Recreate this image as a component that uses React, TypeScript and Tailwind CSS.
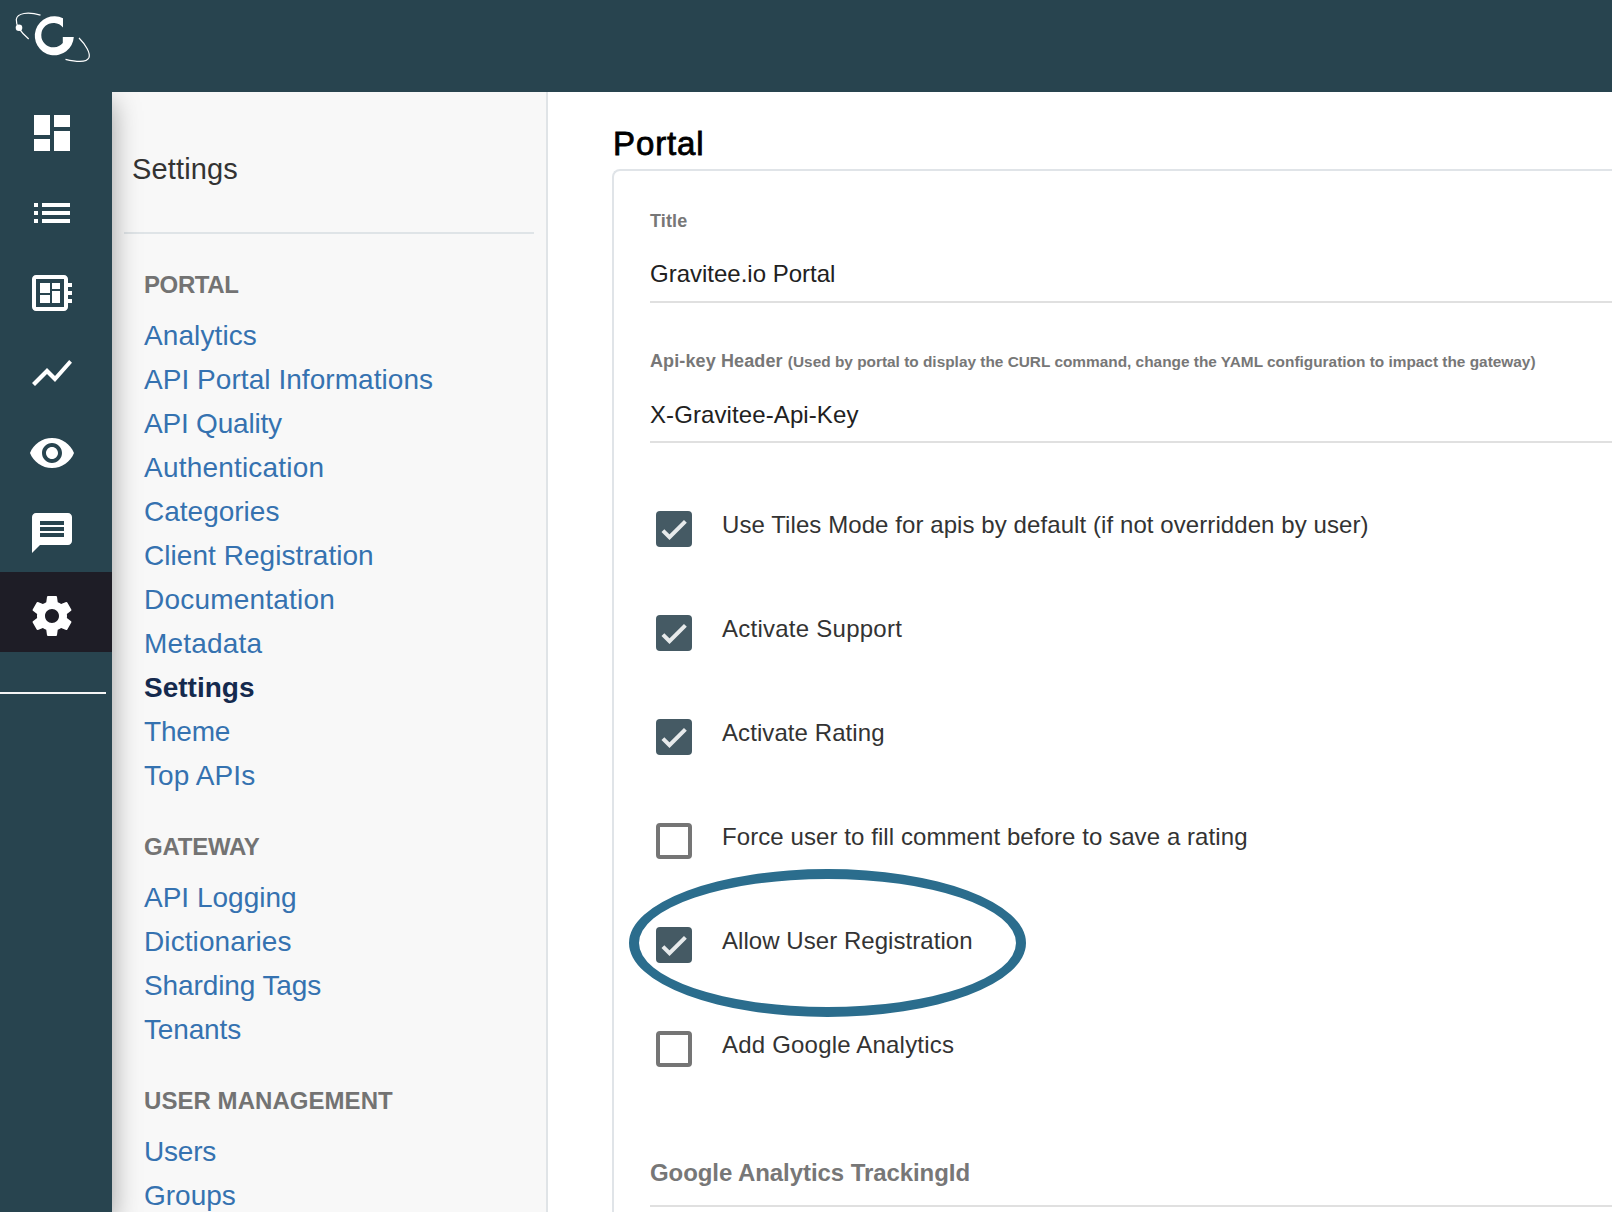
import React from "react";
import { MdDashboard, MdDeveloperBoard, MdList, MdMessage, MdShowChart, MdVisibility } from "react-icons/md";

type Item = { label: string; spacing?: string; active?: boolean };

const groups: { title: string; spacing: string; items: Item[] }[] = [
  {
    title: "PORTAL",
    spacing: "tracking-[-0.4px]",
    items: [
      { label: "Analytics", spacing: "tracking-[0.1px]" },
      { label: "API Portal Informations", spacing: "tracking-[0.05px]" },
      { label: "API Quality", spacing: "tracking-[-0.2px]" },
      { label: "Authentication", spacing: "tracking-[0.2px]" },
      { label: "Categories" },
      { label: "Client Registration", spacing: "tracking-[0.05px]" },
      { label: "Documentation", spacing: "tracking-[0.2px]" },
      { label: "Metadata", spacing: "tracking-[0.2px]" },
      { label: "Settings", active: true },
      { label: "Theme", spacing: "tracking-[-0.2px]" },
      { label: "Top APIs", spacing: "tracking-[0.1px]" },
    ],
  },
  {
    title: "GATEWAY",
    spacing: "tracking-[-0.25px]",
    items: [
      { label: "API Logging" },
      { label: "Dictionaries", spacing: "tracking-[0.1px]" },
      { label: "Sharding Tags", spacing: "tracking-[-0.1px]" },
      { label: "Tenants", spacing: "tracking-[-0.15px]" },
    ],
  },
  {
    title: "USER MANAGEMENT",
    spacing: "tracking-[0.05px]",
    items: [{ label: "Users", spacing: "tracking-[-0.2px]" }, { label: "Groups" }],
  },
];

const options = [
  { label: "Use Tiles Mode for apis by default (if not overridden by user)", checked: true, spacing: "tracking-[0.08px]" },
  { label: "Activate Support", checked: true, spacing: "tracking-[0.25px]" },
  { label: "Activate Rating", checked: true, spacing: "tracking-[0.08px]" },
  { label: "Force user to fill comment before to save a rating", checked: false, spacing: "tracking-[0.08px]" },
  { label: "Allow User Registration", checked: true, circled: true, spacing: "tracking-[0.05px]" },
  { label: "Add Google Analytics", checked: false, spacing: "tracking-[0.2px]" },
];

const navIcons = [MdDashboard, MdList, MdDeveloperBoard, MdShowChart, MdVisibility, MdMessage];

function Logo() {
  return (
    <svg viewBox="0 0 120 92" className="h-[92px] w-[120px]" fill="none">
      <path d="M63 27.500V18.300A19.500 19.500 0 1 0 73.800 37H62.800V43A12.200 12.200 0 1 1 63 27.500Z" fill="#fff" />
      <path d="M40.500 15.200C28 11.500 17 13 16.300 19.500C15.800 25 20 31.500 28.700 39" stroke="#fff" strokeWidth="1.200" />
      <circle cx="19" cy="27.800" r="3.300" fill="#fff" />
      <path d="M79 38C86 45 90.500 53 89 57.500C87 62.500 77 62 65.500 59.300" stroke="#fff" strokeWidth="1.200" />
    </svg>
  );
}

function Gear() {
  return (
    <svg viewBox="0 0 24 24" className="size-12" fill="currentColor">
      <path d="M19.43 12.98c.04-.32.07-.64.07-.98s-.03-.66-.07-.98l2.110-1.650c.19-.15.24-.42.12-.64l-2-3.460c-.12-.22-.39-.3-.61-.22l-2.490 1c-.52-.4-1.080-.73-1.690-.98l-.38-2.650C14.460 2.180 14.250 2 14 2h-4c-.25 0-.46.18-.49.42l-.38 2.650c-.61.25-1.170.59-1.690.98l-2.490-1c-.23-.09-.49 0-.61.22l-2 3.460c-.13.22-.07.49.12.64l2.110 1.650c-.04.32-.07.65-.07.98s.03.66.07.98l-2.110 1.650c-.19.15-.24.42-.12.64l2 3.460c.12.22.39.3.61.22l2.490-1c.52.4 1.080.73 1.690.98l.38 2.650c.03.24.24.42.49.42h4c.25 0 .46-.18.49-.42l.38-2.650c.61-.25 1.170-.59 1.690-.98l2.490 1c.23.09.49 0 .61-.22l2-3.460c.12-.22.07-.49-.12-.64l-2.110-1.650zM12 15.500c-1.930 0-3.500-1.570-3.500-3.500s1.570-3.500 3.500-3.500 3.500 1.570 3.500 3.500-1.570 3.500-3.500 3.500z" />
    </svg>
  );
}

function Checkbox({ checked }: { checked: boolean }) {
  if (!checked) return <span className="size-9 shrink-0 rounded-[4px] border-4 border-[#757575]" />;
  return (
    <span className="size-9 shrink-0 rounded-[4px] bg-[#455a64]">
      <svg viewBox="0 0 36 36" className="size-9" fill="none">
        <path d="M6.900 19.600L13.500 26.200L29.400 10.300" stroke="#e7eaeb" strokeWidth="4" />
      </svg>
    </span>
  );
}

export default function App() {
  return (
    <div className="flex h-[1212px] w-[1612px] flex-col overflow-hidden bg-white font-['Liberation_Sans',Arial,sans-serif]">
      <header className="relative z-20 h-[92px] shrink-0 bg-[#28444f]">
        <Logo />
      </header>
      <div className="flex min-h-0 flex-1">
        <nav className="relative z-10 flex w-28 shrink-0 flex-col bg-[#28444f] text-white shadow-[0_10px_26px_rgba(0,0,0,0.38)]">
          {navIcons.map((Icon, i) => (
            <div key={i} className="h-20 pt-[17px] pl-7">
              <Icon className="size-12" />
            </div>
          ))}
          <div className="h-20 bg-[#1e1d26] pt-5 pl-7">
            <Gear />
          </div>
          <div className="mt-10 h-0.5 w-[106px] bg-[#f5f5f5]" />
        </nav>
        <aside className="flex w-[436px] shrink-0 flex-col overflow-hidden border-r-2 border-[#e0e4e7] bg-[#f8f8f8]">
          <h2 className="h-[140px] shrink-0 pt-[61px] pl-5 text-[29px] leading-[32px] tracking-[0.15px] text-[#333]">Settings</h2>
          <div className="mr-3 ml-3 h-0.5 shrink-0 bg-[#dfe4e7]" />
          <div className="flex flex-col gap-[33px] pt-[35px] pl-8">
            {groups.map((g) => (
              <section key={g.title}>
                <h3 className={`mb-[13px] text-2xl leading-8 font-bold text-[#737373] ${g.spacing}`}>{g.title}</h3>
                <ul>
                  {g.items.map((item) => (
                    <li
                      key={item.label}
                      className={`h-11 text-[28px] leading-[44px] ${item.spacing ?? ""} ${item.active ? "font-bold text-[#152a4e]" : "text-[#3572b0]"}`}
                    >
                      {item.label}
                    </li>
                  ))}
                </ul>
              </section>
            ))}
          </div>
        </aside>
        <main className="flex min-w-0 flex-1 flex-col pt-8 pl-16">
          <h1 className="h-[45px] shrink-0 pl-px text-[33px] leading-10 tracking-[0.9px] text-black [-webkit-text-stroke:0.8px_#000]">Portal</h1>
          <div className="flex-1 rounded-tl-lg border-t-2 border-l-2 border-[#e0e4e8] pl-9">
            <div className="h-[132px] border-b-2 border-[#e0e0e0] pt-[38px]">
              <div className="text-lg leading-6 font-bold tracking-[0.15px] text-[#777]">Title</div>
              <div className="mt-[25px] text-2xl leading-8 text-[#212121]">Gravitee.io Portal</div>
            </div>
            <div className="h-[140px] border-b-2 border-[#e0e0e0] pt-[46px]">
              <div className="text-lg leading-6 font-bold tracking-[0.12px] whitespace-nowrap text-[#777]">
                Api-key Header{" "}
                <span className="text-[15.4px] tracking-normal">
                  (Used by portal to display the CURL command, change the YAML configuration to impact the gateway)
                </span>
              </div>
              <div className="mt-[25px] text-2xl leading-8 tracking-[0.1px] text-[#212121]">X-Gravitee-Api-Key</div>
            </div>
            <div className="pt-[66px]">
              {options.map((o) => (
                <div key={o.label} className="relative flex h-[104px] items-start gap-[30px] pt-0.5 pl-1.5">
                  <Checkbox checked={o.checked} />
                  <span className={`-mt-0.5 text-2xl leading-8 whitespace-nowrap text-[#333] ${o.spacing}`}>{o.label}</span>
                  {o.circled && (
                    <span className="absolute -top-14 -left-[21px] h-[148px] w-[397px] rounded-[50%] border-[10px] border-[#2b6d8d]" />
                  )}
                </div>
              ))}
            </div>
            <div className="h-[74px] border-b-2 border-[#e0e0e0] pt-[24px] text-2xl leading-8 font-bold tracking-[-0.07px] text-[#777]">
              Google Analytics TrackingId
            </div>
          </div>
        </main>
      </div>
    </div>
  );
}
